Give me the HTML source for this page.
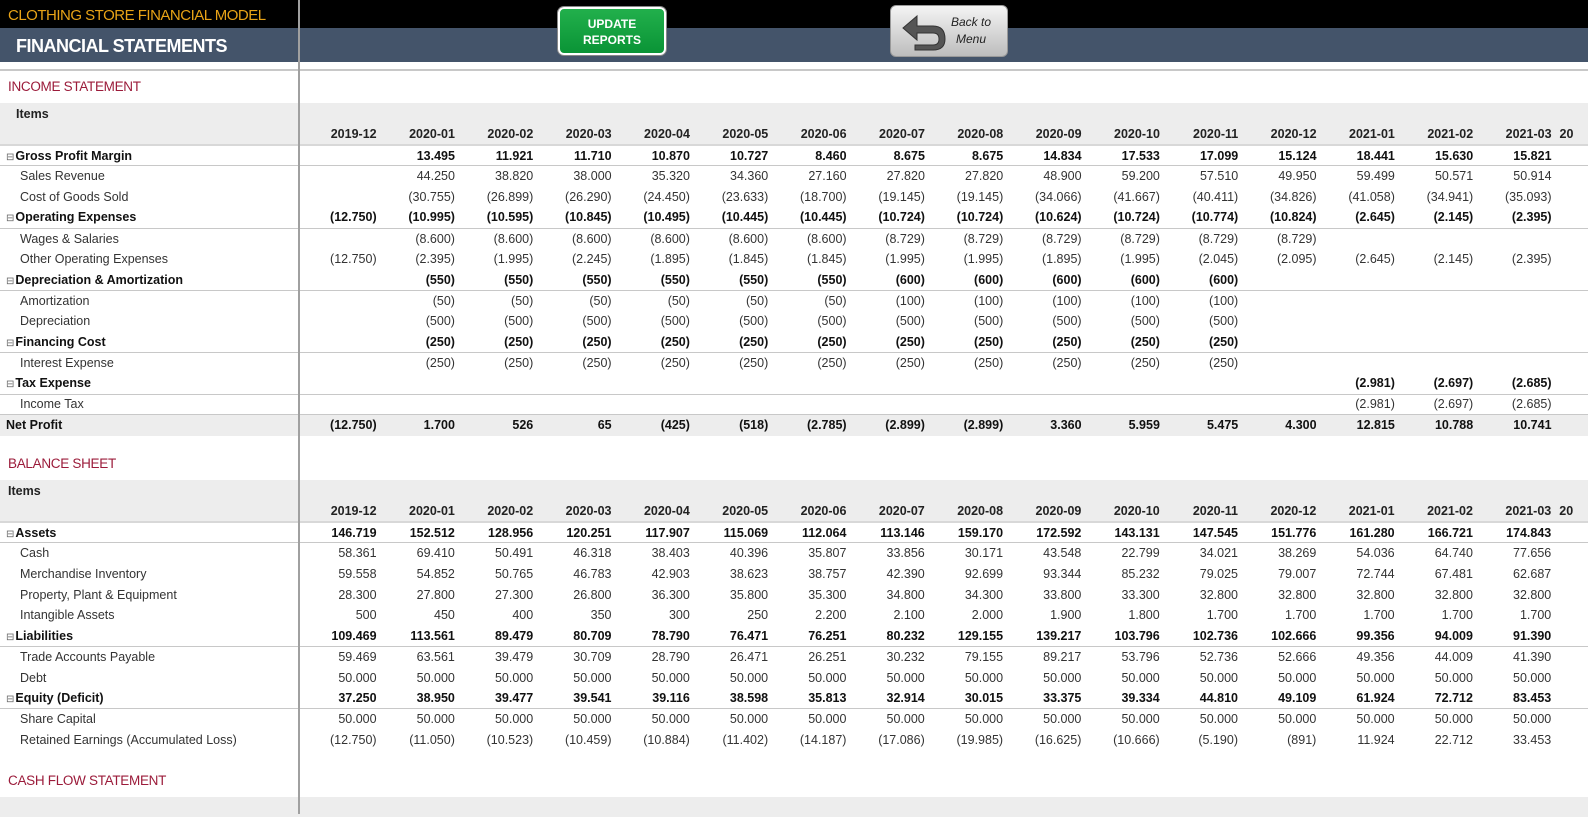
<!DOCTYPE html>
<html><head><meta charset="utf-8"><style>
*{margin:0;padding:0;box-sizing:border-box}
body{width:1588px;height:814px;overflow:hidden;background:#fff;font-family:"Liberation Sans",sans-serif;position:relative;color:#333}
.blk{position:absolute;left:0;top:0;width:1588px;height:28px;background:#000}
.sl{position:absolute;left:0;top:28px;width:1588px;height:34px;background:#44546a}
.t1{position:absolute;left:8px;top:7px;color:#e8a317;font-size:15px;letter-spacing:-0.5px}
.t2{position:absolute;left:16px;top:36px;color:#fff;font-size:18px;font-weight:bold;letter-spacing:-0.5px}
.vline{position:absolute;left:298px;top:0;width:2px;height:814px;background:#a0a0a0}
.hline{position:absolute;left:0;top:69px;width:1588px;height:2px;background:#c8c8c8}
.btn1{position:absolute;left:558px;top:7px;width:108px;height:48px;border:2px solid #fff;border-radius:6px;background:linear-gradient(#22b04c,#0a9436);color:#fff;font-weight:bold;font-size:12px;text-align:center;line-height:16px;padding-top:7px;box-shadow:0 0 0 1px #888}
.btn2{position:absolute;left:890px;top:5px;width:118px;height:52px;border-radius:6px;background:linear-gradient(#f4f4f4,#bdbdbd);border:1px solid #999}
.btn2 span{position:absolute;left:60px;top:8px;font-style:italic;font-size:12px;color:#222;text-align:center;line-height:17px}
.sec{position:absolute;left:8px;font-size:13.5px;color:#9b1b3a;letter-spacing:-0.3px}
table{position:absolute;left:0;border-collapse:collapse;table-layout:fixed;font-size:12.5px}
td{height:20.75px;text-align:right;padding-right:4px;white-space:nowrap;overflow:visible}
td:first-child{text-align:left;padding-left:20px}
tr.g td{font-weight:bold;color:#111;border-bottom:1px solid #c8c8c8}
tr.g td:first-child{padding-left:6px}
tr.g td:first-child:before{content:"⊟";font-weight:normal;font-size:10px;color:#666;margin-right:1px}
tr.n td{font-weight:bold;color:#111;background:#ededed;border-top:1px solid #c8c8c8}
tr.n td:first-child{padding-left:6px}
tr.h td{background:#ededed;font-weight:bold;color:#222;height:21px}
tr.h td:first-child{padding-left:16px;vertical-align:top;padding-top:4px}
tr.hd td{background:#ededed;font-weight:bold;color:#222;height:21px;border-bottom:2px solid #d8d8d8}
.band{position:absolute;left:0;width:1588px;height:20px;background:#ededed}
</style></head><body>
<div class="blk"></div><div class="sl"></div>
<div class="t1">CLOTHING STORE FINANCIAL MODEL</div>
<div class="t2">FINANCIAL STATEMENTS</div>
<div class="btn1">UPDATE<br>REPORTS</div>
<div class="btn2"><svg width="50" height="40" style="position:absolute;left:8px;top:6px" viewBox="0 0 50 40"><path d="M18 4 L4 16 L18 28 L18 21 L34 21 Q40 21 40 27 Q40 33 34 33 L16 33 L16 38 L34 38 Q46 38 46 27 Q46 14 34 14 L18 14 Z" fill="#555" stroke="#333" stroke-width="1"/></svg><span>Back to<br>Menu</span></div>
<div class="hline"></div>
<div class="sec" style="top:79px">INCOME STATEMENT</div>
<table style="top:103px;width:1634px">
<colgroup><col style="width:298px"><col style="width:81px"><col span="16" style="width:78px"></colgroup>
<tr class="h"><td colspan="18">Items</td></tr>
<tr class="hd"><td></td><td>2019-12</td><td>2020-01</td><td>2020-02</td><td>2020-03</td><td>2020-04</td><td>2020-05</td><td>2020-06</td><td>2020-07</td><td>2020-08</td><td>2020-09</td><td>2020-10</td><td>2020-11</td><td>2020-12</td><td>2021-01</td><td>2021-02</td><td>2021-03</td><td style="text-align:left;padding-left:4px">20</td></tr>
<tr class="g"><td>Gross Profit Margin</td><td></td><td>13.495</td><td>11.921</td><td>11.710</td><td>10.870</td><td>10.727</td><td>8.460</td><td>8.675</td><td>8.675</td><td>14.834</td><td>17.533</td><td>17.099</td><td>15.124</td><td>18.441</td><td>15.630</td><td>15.821</td><td></td></tr>
<tr><td>Sales Revenue</td><td></td><td>44.250</td><td>38.820</td><td>38.000</td><td>35.320</td><td>34.360</td><td>27.160</td><td>27.820</td><td>27.820</td><td>48.900</td><td>59.200</td><td>57.510</td><td>49.950</td><td>59.499</td><td>50.571</td><td>50.914</td><td></td></tr>
<tr><td>Cost of Goods Sold</td><td></td><td>(30.755)</td><td>(26.899)</td><td>(26.290)</td><td>(24.450)</td><td>(23.633)</td><td>(18.700)</td><td>(19.145)</td><td>(19.145)</td><td>(34.066)</td><td>(41.667)</td><td>(40.411)</td><td>(34.826)</td><td>(41.058)</td><td>(34.941)</td><td>(35.093)</td><td></td></tr>
<tr class="g"><td>Operating Expenses</td><td>(12.750)</td><td>(10.995)</td><td>(10.595)</td><td>(10.845)</td><td>(10.495)</td><td>(10.445)</td><td>(10.445)</td><td>(10.724)</td><td>(10.724)</td><td>(10.624)</td><td>(10.724)</td><td>(10.774)</td><td>(10.824)</td><td>(2.645)</td><td>(2.145)</td><td>(2.395)</td><td></td></tr>
<tr><td>Wages &amp; Salaries</td><td></td><td>(8.600)</td><td>(8.600)</td><td>(8.600)</td><td>(8.600)</td><td>(8.600)</td><td>(8.600)</td><td>(8.729)</td><td>(8.729)</td><td>(8.729)</td><td>(8.729)</td><td>(8.729)</td><td>(8.729)</td><td></td><td></td><td></td><td></td></tr>
<tr><td>Other Operating Expenses</td><td>(12.750)</td><td>(2.395)</td><td>(1.995)</td><td>(2.245)</td><td>(1.895)</td><td>(1.845)</td><td>(1.845)</td><td>(1.995)</td><td>(1.995)</td><td>(1.895)</td><td>(1.995)</td><td>(2.045)</td><td>(2.095)</td><td>(2.645)</td><td>(2.145)</td><td>(2.395)</td><td></td></tr>
<tr class="g"><td>Depreciation &amp; Amortization</td><td></td><td>(550)</td><td>(550)</td><td>(550)</td><td>(550)</td><td>(550)</td><td>(550)</td><td>(600)</td><td>(600)</td><td>(600)</td><td>(600)</td><td>(600)</td><td></td><td></td><td></td><td></td><td></td></tr>
<tr><td>Amortization</td><td></td><td>(50)</td><td>(50)</td><td>(50)</td><td>(50)</td><td>(50)</td><td>(50)</td><td>(100)</td><td>(100)</td><td>(100)</td><td>(100)</td><td>(100)</td><td></td><td></td><td></td><td></td><td></td></tr>
<tr><td>Depreciation</td><td></td><td>(500)</td><td>(500)</td><td>(500)</td><td>(500)</td><td>(500)</td><td>(500)</td><td>(500)</td><td>(500)</td><td>(500)</td><td>(500)</td><td>(500)</td><td></td><td></td><td></td><td></td><td></td></tr>
<tr class="g"><td>Financing Cost</td><td></td><td>(250)</td><td>(250)</td><td>(250)</td><td>(250)</td><td>(250)</td><td>(250)</td><td>(250)</td><td>(250)</td><td>(250)</td><td>(250)</td><td>(250)</td><td></td><td></td><td></td><td></td><td></td></tr>
<tr><td>Interest Expense</td><td></td><td>(250)</td><td>(250)</td><td>(250)</td><td>(250)</td><td>(250)</td><td>(250)</td><td>(250)</td><td>(250)</td><td>(250)</td><td>(250)</td><td>(250)</td><td></td><td></td><td></td><td></td><td></td></tr>
<tr class="g"><td>Tax Expense</td><td></td><td></td><td></td><td></td><td></td><td></td><td></td><td></td><td></td><td></td><td></td><td></td><td></td><td>(2.981)</td><td>(2.697)</td><td>(2.685)</td><td></td></tr>
<tr><td>Income Tax</td><td></td><td></td><td></td><td></td><td></td><td></td><td></td><td></td><td></td><td></td><td></td><td></td><td></td><td>(2.981)</td><td>(2.697)</td><td>(2.685)</td><td></td></tr>
<tr class="n"><td>Net Profit</td><td>(12.750)</td><td>1.700</td><td>526</td><td>65</td><td>(425)</td><td>(518)</td><td>(2.785)</td><td>(2.899)</td><td>(2.899)</td><td>3.360</td><td>5.959</td><td>5.475</td><td>4.300</td><td>12.815</td><td>10.788</td><td>10.741</td><td></td></tr>
</table>
<div class="sec" style="top:456px">BALANCE SHEET</div>
<table style="top:480px;width:1634px">
<colgroup><col style="width:298px"><col style="width:81px"><col span="16" style="width:78px"></colgroup>
<tr class="h"><td colspan="18" style="padding-left:8px">Items</td></tr>
<tr class="hd"><td></td><td>2019-12</td><td>2020-01</td><td>2020-02</td><td>2020-03</td><td>2020-04</td><td>2020-05</td><td>2020-06</td><td>2020-07</td><td>2020-08</td><td>2020-09</td><td>2020-10</td><td>2020-11</td><td>2020-12</td><td>2021-01</td><td>2021-02</td><td>2021-03</td><td style="text-align:left;padding-left:4px">20</td></tr>
<tr class="g"><td>Assets</td><td>146.719</td><td>152.512</td><td>128.956</td><td>120.251</td><td>117.907</td><td>115.069</td><td>112.064</td><td>113.146</td><td>159.170</td><td>172.592</td><td>143.131</td><td>147.545</td><td>151.776</td><td>161.280</td><td>166.721</td><td>174.843</td><td></td></tr>
<tr><td>Cash</td><td>58.361</td><td>69.410</td><td>50.491</td><td>46.318</td><td>38.403</td><td>40.396</td><td>35.807</td><td>33.856</td><td>30.171</td><td>43.548</td><td>22.799</td><td>34.021</td><td>38.269</td><td>54.036</td><td>64.740</td><td>77.656</td><td></td></tr>
<tr><td>Merchandise Inventory</td><td>59.558</td><td>54.852</td><td>50.765</td><td>46.783</td><td>42.903</td><td>38.623</td><td>38.757</td><td>42.390</td><td>92.699</td><td>93.344</td><td>85.232</td><td>79.025</td><td>79.007</td><td>72.744</td><td>67.481</td><td>62.687</td><td></td></tr>
<tr><td>Property, Plant &amp; Equipment</td><td>28.300</td><td>27.800</td><td>27.300</td><td>26.800</td><td>36.300</td><td>35.800</td><td>35.300</td><td>34.800</td><td>34.300</td><td>33.800</td><td>33.300</td><td>32.800</td><td>32.800</td><td>32.800</td><td>32.800</td><td>32.800</td><td></td></tr>
<tr><td>Intangible Assets</td><td>500</td><td>450</td><td>400</td><td>350</td><td>300</td><td>250</td><td>2.200</td><td>2.100</td><td>2.000</td><td>1.900</td><td>1.800</td><td>1.700</td><td>1.700</td><td>1.700</td><td>1.700</td><td>1.700</td><td></td></tr>
<tr class="g"><td>Liabilities</td><td>109.469</td><td>113.561</td><td>89.479</td><td>80.709</td><td>78.790</td><td>76.471</td><td>76.251</td><td>80.232</td><td>129.155</td><td>139.217</td><td>103.796</td><td>102.736</td><td>102.666</td><td>99.356</td><td>94.009</td><td>91.390</td><td></td></tr>
<tr><td>Trade Accounts Payable</td><td>59.469</td><td>63.561</td><td>39.479</td><td>30.709</td><td>28.790</td><td>26.471</td><td>26.251</td><td>30.232</td><td>79.155</td><td>89.217</td><td>53.796</td><td>52.736</td><td>52.666</td><td>49.356</td><td>44.009</td><td>41.390</td><td></td></tr>
<tr><td>Debt</td><td>50.000</td><td>50.000</td><td>50.000</td><td>50.000</td><td>50.000</td><td>50.000</td><td>50.000</td><td>50.000</td><td>50.000</td><td>50.000</td><td>50.000</td><td>50.000</td><td>50.000</td><td>50.000</td><td>50.000</td><td>50.000</td><td></td></tr>
<tr class="g"><td>Equity (Deficit)</td><td>37.250</td><td>38.950</td><td>39.477</td><td>39.541</td><td>39.116</td><td>38.598</td><td>35.813</td><td>32.914</td><td>30.015</td><td>33.375</td><td>39.334</td><td>44.810</td><td>49.109</td><td>61.924</td><td>72.712</td><td>83.453</td><td></td></tr>
<tr><td>Share Capital</td><td>50.000</td><td>50.000</td><td>50.000</td><td>50.000</td><td>50.000</td><td>50.000</td><td>50.000</td><td>50.000</td><td>50.000</td><td>50.000</td><td>50.000</td><td>50.000</td><td>50.000</td><td>50.000</td><td>50.000</td><td>50.000</td><td></td></tr>
<tr><td>Retained Earnings (Accumulated Loss)</td><td>(12.750)</td><td>(11.050)</td><td>(10.523)</td><td>(10.459)</td><td>(10.884)</td><td>(11.402)</td><td>(14.187)</td><td>(17.086)</td><td>(19.985)</td><td>(16.625)</td><td>(10.666)</td><td>(5.190)</td><td>(891)</td><td>11.924</td><td>22.712</td><td>33.453</td><td></td></tr>
</table>
<div class="sec" style="top:773px">CASH FLOW STATEMENT</div>
<div class="band" style="top:797px"></div>
<div class="vline"></div>
</body></html>
